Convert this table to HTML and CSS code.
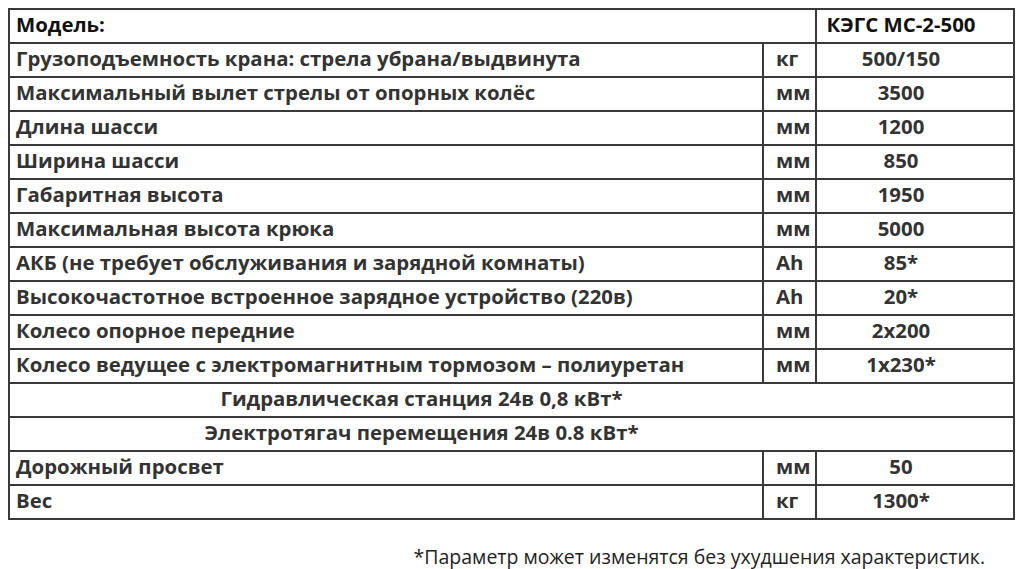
FILE: index.html
```html
<!DOCTYPE html>
<html lang="ru">
<head>
<meta charset="utf-8">
<link rel="stylesheet" href="styles.css">
</head>
<body>
<table class="spec">
  <colgroup>
    <col class="c-name">
    <col class="c-unit">
    <col class="c-val">
  </colgroup>
  <tr class="head"><td colspan="2">Модель:</td><td class="val">КЭГС МС-2-500</td></tr>
  <tr><td>Грузоподъемность крана: стрела убрана/выдвинута</td><td class="unit">кг</td><td class="val">500/150</td></tr>
  <tr><td>Максимальный вылет стрелы от опорных колёс</td><td class="unit">мм</td><td class="val">3500</td></tr>
  <tr><td>Длина шасси</td><td class="unit">мм</td><td class="val">1200</td></tr>
  <tr><td>Ширина шасси</td><td class="unit">мм</td><td class="val">850</td></tr>
  <tr><td>Габаритная высота</td><td class="unit">мм</td><td class="val">1950</td></tr>
  <tr><td>Максимальная высота крюка</td><td class="unit">мм</td><td class="val">5000</td></tr>
  <tr><td>АКБ (не требует обслуживания и зарядной комнаты)</td><td class="unit">Ah</td><td class="val">85*</td></tr>
  <tr><td>Высокочастотное встроенное зарядное устройство (220в)</td><td class="unit">Ah</td><td class="val">20*</td></tr>
  <tr><td>Колесо опорное передние</td><td class="unit">мм</td><td class="val">2х200</td></tr>
  <tr><td>Колесо ведущее с электромагнитным тормозом – полиуретан</td><td class="unit">мм</td><td class="val">1х230*</td></tr>
  <tr class="wide"><td colspan="3">Гидравлическая станция 24в 0,8 кВт*</td></tr>
  <tr class="wide"><td colspan="3">Электротягач перемещения 24в 0.8 кВт*</td></tr>
  <tr><td>Дорожный просвет</td><td class="unit">мм</td><td class="val">50</td></tr>
  <tr><td>Вес</td><td class="unit">кг</td><td class="val">1300*</td></tr>
</table>
<p class="note">*Параметр может изменятся без ухудшения характеристик.</p>
</body>
</html>
```

FILE: styles.css
```css
html, body {
  margin: 0;
  padding: 0;
  background: #ffffff;
}
body {
  padding: 8px;
  font-family: "Open Sans", "DejaVu Sans", sans-serif;
}
.spec {
  width: 1005px;
  border-collapse: collapse;
  table-layout: fixed;
  border: 2px solid #333;
  color: #333;
  font-weight: 700;
  font-size: 20.4px;
}
.c-name { width: 754px; }
.c-unit { width: 53px; }
.c-val { width: 198px; }
.spec td {
  height: 28px;
  padding: 0 0 4px 6px;
  border: 2px solid #3a3a3a;
  white-space: nowrap;
  vertical-align: middle;
  line-height: 24px;
}
.spec td.unit {
  padding-left: 12px;
}
.spec td.val {
  padding: 0 28px 4px 0;
  text-align: center;
}
.head td {
  color: #111;
}
.wide td {
  text-align: center;
  padding: 0 180px 4px 0;
}
.note {
  margin: 24px 31px 0 0;
  text-align: right;
  font-size: 19.5px;
  line-height: 26px;
  color: #222;
}
```
